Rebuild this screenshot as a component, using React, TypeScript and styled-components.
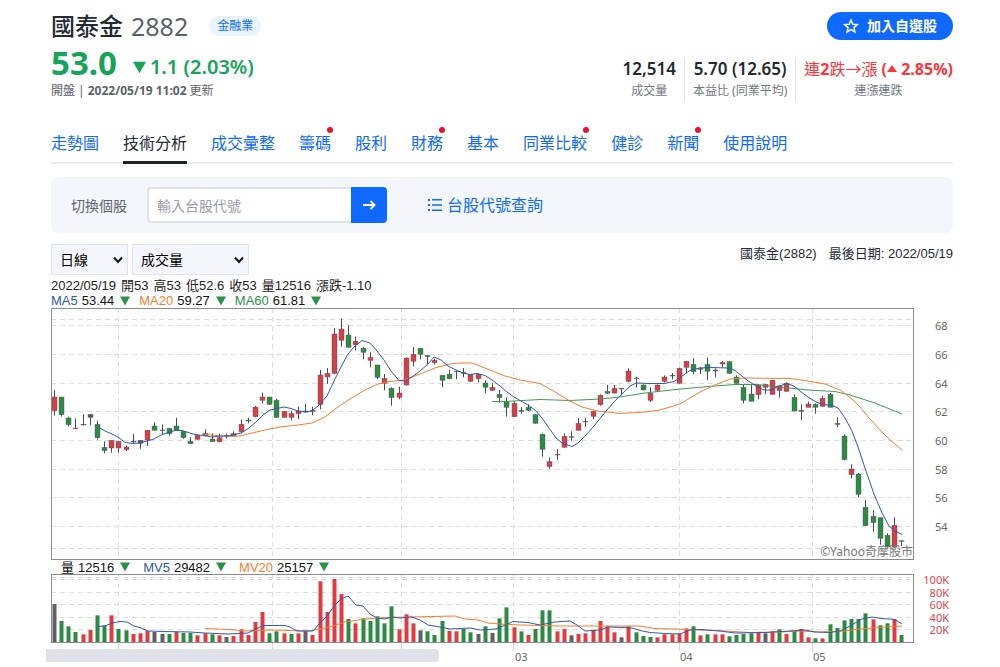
import React from "react";
import styled, { createGlobalStyle } from "styled-components";

const ui = `"Noto Sans", "Noto Sans CJK TC", sans-serif`;
const plain = `"Liberation Sans", "Noto Sans CJK TC", sans-serif`;

const GlobalStyle = createGlobalStyle`
  * { box-sizing: border-box; }
  html { overflow-x: hidden; }
  body { margin: 0; background: #fff; color: #232a31; font-family: ${ui}; }
`;

const Page = styled.main`
  padding: 8px 47px 0 51px;
`;

const Header = styled.header`
  display: flex;
  justify-content: space-between;
`;

const TitleRow = styled.div`
  display: flex;
  align-items: center;
  height: 36px;
`;

const Name = styled.h1`
  margin: 0 8px 0 0;
  font-size: 24px;
  line-height: 36px;
  font-weight: 500;
`;

const Code = styled.span`
  font-size: 25px;
  line-height: 36px;
  color: #5b636a;
`;

const Tag = styled.a`
  margin-left: 21px;
  padding: 0 8px;
  border-radius: 10px;
  background: #eaf4ff;
  color: #0f69ff;
  font-size: 12px;
  line-height: 20px;
  text-decoration: none;
`;

const PriceRow = styled.div`
  display: flex;
  align-items: center;
  height: 38px;
  color: #17a35b;
  font-weight: 600;
`;

const Price = styled.span`
  font-size: 33px;
  line-height: 38px;
  font-weight: 700;
`;

const Change = styled.span`
  display: flex;
  align-items: center;
  gap: 4px;
  margin: 8px 0 0 16px;
  font-size: 20px;
  line-height: 28px;
`;

const Status = styled.div`
  display: flex;
  gap: 3px;
  font-size: 12px;
  line-height: 18px;
  color: #5b636a;
`;

const HeaderSide = styled.div`
  display: flex;
  flex-direction: column;
  align-items: flex-end;
  gap: 18px;
  padding-top: 4px;
`;

const FollowButton = styled.button`
  display: flex;
  align-items: center;
  justify-content: center;
  gap: 8px;
  width: 126px;
  height: 28px;
  padding: 0;
  border: 0;
  border-radius: 14px;
  background: #0f69ff;
  color: #fff;
  font: 700 14px/28px ${ui};
`;

const Stats = styled.dl`
  display: flex;
  margin: 0;
`;

const Stat = styled.div`
  display: flex;
  flex-direction: column;
  align-items: center;
  height: 42px;
  padding: 0 8px;
  border-left: 1px solid #e0e4e9;
  &:first-child { border-left: 0; }
  &:last-child { padding-right: 0; }
`;

const StatValue = styled.dd<{ $up?: boolean }>`
  margin: 0;
  font-size: ${(p) => (p.$up ? 16 : 17)}px;
  line-height: 22px;
  font-weight: ${(p) => (p.$up ? 400 : 600)};
  color: ${(p) => (p.$up ? "#ff333a" : "#232a31")};
  white-space: nowrap;
`;

const StatLabel = styled.dt`
  order: 2;
  font-size: 12px;
  line-height: 22px;
  color: #6e7780;
`;

const Strong = styled.span`
  font-weight: 700;
`;

const Tabs = styled.nav`
  display: flex;
  gap: 24px;
  height: 39px;
  margin-top: 25px;
  border-bottom: 2px solid #e8eaed;
`;

const Tab = styled.a<{ $active?: boolean }>`
  position: relative;
  height: 39px;
  border-bottom: ${(p) => (p.$active ? "3px solid #1d2228" : "0")};
  color: ${(p) => (p.$active ? "#232a31" : "#0f69ff")};
  font-size: 16px;
  line-height: 37px;
  text-decoration: none;
  white-space: nowrap;
`;

const Dot = styled.span`
  position: absolute;
  top: 2px;
  right: -2px;
  width: 6px;
  height: 6px;
  border-radius: 50%;
  background: #eb0f29;
`;

const SearchBar = styled.form`
  display: flex;
  align-items: center;
  height: 56px;
  margin-top: 13px;
  padding: 0 20px;
  border-radius: 8px;
  background: #f3f7fb;
`;

const SearchLabel = styled.label`
  width: 76px;
  font-size: 14px;
  color: #5b636a;
`;

const SearchInput = styled.input`
  width: 204px;
  height: 36px;
  padding: 0 8px;
  border: 2px solid #e0e4e9;
  border-right: 0;
  border-radius: 4px 0 0 4px;
  background: #fff;
  font: 400 14px ${ui};
  &::placeholder { color: #979ea8; opacity: 1; }
`;

const SearchButton = styled.button`
  display: flex;
  align-items: center;
  justify-content: center;
  width: 36px;
  height: 36px;
  padding: 0;
  border: 0;
  border-radius: 0 4px 4px 0;
  background: #0f69ff;
`;

const LookupLink = styled.a`
  display: flex;
  align-items: center;
  gap: 4px;
  margin-left: 40px;
  color: #0f69ff;
  font-size: 16px;
  line-height: 24px;
  text-decoration: none;
`;

const Controls = styled.div`
  display: flex;
  gap: 4px;
  height: 31px;
  margin-top: 11px;
`;

const Picker = styled.div<{ $width: number }>`
  position: relative;
  width: ${(p) => p.$width}px;
  svg { position: absolute; right: 5px; top: 12px; pointer-events: none; }
`;

const Select = styled.select`
  appearance: none;
  width: 100%;
  height: 31px;
  padding: 0 8px;
  border: 1px solid #e0e4e9;
  border-radius: 0;
  background: #f3f7fb;
  color: #000;
  font: 400 14px ${plain};
`;

const Updated = styled.p`
  display: flex;
  gap: 12px;
  margin: 0 0 0 auto;
  font: 400 13px/20px ${plain};
  color: #232a31;
`;

const Quote = styled.p`
  display: flex;
  gap: 5px;
  margin: 3px 0 0;
  font: 400 13px/15px ${plain};
  color: #222;
`;

const Legend = styled.div<{ $inset?: boolean }>`
  display: flex;
  gap: ${(p) => (p.$inset ? 13 : 9)}px;
  height: ${(p) => (p.$inset ? 14 : 15)}px;
  padding-left: ${(p) => (p.$inset ? 10 : 0)}px;
  font: 400 13px/15px ${plain};
`;

const LegendItem = styled.span`
  display: flex;
  align-items: center;
  gap: 4px;
  color: #111;
  svg { margin-left: 2px; }
`;

const Series = styled.span<{ $color: string }>`
  color: ${(p) => p.$color};
`;

const Chart = styled.svg`
  display: block;
  width: 100%;
  height: auto;
  overflow: visible;
`;

const VolumePanel = styled.div`
  position: relative;
`;

const ScrollThumb = styled.div`
  position: absolute;
  left: -5px;
  top: 75px;
  width: 393px;
  height: 13px;
  border-radius: 0 4px 4px 0;
  background: #dfe2e6;
`;

const BLUE = "#3059b0";
const ORANGE = "#fa7d2e";
const GREEN = "#2d9048";

const Down = ({ size = 10, color = GREEN }: { size?: number; color?: string }) => (
  <svg width={size} height={size} viewBox="0 0 10 10" aria-hidden="true">
    <path d="M0 0.5H10L5 9.5Z" fill={color} />
  </svg>
);

const Chevron = () => (
  <svg width="10" height="8" viewBox="0 0 10 8" aria-hidden="true">
    <path d="M1 1.5L5 6L9 1.5" fill="none" stroke="#111" strokeWidth="2" />
  </svg>
);

/* One row per session: high, body top, body bottom, low (thirds of a unit), colour key */
const candles = `270,291,332,347,r 291,291,344,350,g 350,354,374,379,g 355,384,386,387,r 343,373,375,376,k 343,343,352,376,k
362,373,413,419,g 424,442,452,460,g 421,421,444,458,r 424,424,444,458,r 436,441,449,453,r 402,424,426,430,k
421,421,430,446,k 391,391,420,438,r 367,378,391,391,g 373,390,392,403,k 385,385,401,406,g 353,378,391,391,g
394,394,413,416,g 411,424,431,431,g 403,406,418,419,r 388,400,408,409,r 400,417,425,426,g 401,413,425,427,r
400,407,409,416,k 394,401,408,408,r 359,373,395,401,r 353,360,363,370,g 318,321,350,352,r 278,291,301,310,r
291,291,313,315,g 296,301,352,354,g 334,334,352,353,r 332,340,352,361,r 320,333,341,358,r 312,333,336,338,k
320,331,334,346,k 210,225,314,328,r 204,220,231,252,r 84,102,220,223,r 55,87,121,140,r 75,105,142,142,g
110,124,134,151,r 141,145,157,178,g 157,172,181,202,r 194,195,232,237,g 222,235,250,271,r 262,265,293,317,g
260,279,292,298,r 172,174,255,257,r 141,163,184,199,r 144,145,163,178,g 165,166,170,196,g 176,181,188,193,r
225,226,241,262,g 209,223,236,238,g 213,213,215,238,k 204,217,220,232,k 223,223,244,245,r 220,223,236,247,r
241,249,262,279,g 250,262,271,272,r 270,283,293,308,g 292,304,322,350,g 304,310,350,351,r 322,331,334,341,g
313,322,331,333,g 343,344,370,371,g 400,403,448,470,g 472,485,500,506,r 448,463,465,479,r 400,409,442,443,r
394,410,412,422,k 354,370,391,392,r 353,364,366,380,r 332,334,349,358,r 283,286,314,317,r 255,274,280,282,g
255,265,279,281,r 264,265,267,286,k 205,213,244,247,r 230,234,236,262,k 253,255,270,271,g 262,280,301,306,r
253,255,271,274,r 226,231,244,247,r 219,226,228,238,k 203,205,250,251,r 183,184,202,220,r 174,193,215,223,g
201,205,208,222,k 173,193,214,241,g 205,210,213,232,k 183,187,192,202,r 183,185,220,222,g 226,231,250,251,g
255,262,301,310,g 253,282,304,304,g 253,255,284,298,r 252,253,262,282,r 240,241,283,284,r 256,258,272,293,r
247,250,274,275,r 283,292,333,334,g 313,331,334,361,k 305,312,322,322,r 310,313,322,341,g 287,295,319,320,r
279,283,322,322,g 352,370,373,382,k 403,408,479,481,g 493,507,524,535,r 519,522,583,592,g 600,622,677,678,g
630,649,668,695,g 652,653,715,734,g 700,706,741,743,g 652,676,741,743,r 722,722,724,738,k`
  .split(/\s+/)
  .map((row) => {
    const [high, top, bottom, low, tone] = row.split(",");
    return { high: +high / 3 - 8, top: +top / 3 - 8, bottom: +bottom / 3 - 8, low: +low / 3 - 8, tone };
  });

/* Bar tops, same thirds, with the colour key in front */
const volumes = `k162 g213 g229 g246 r253 r240 g196 g226 r196 g237 g241 r252 r250 r243 k246 k252 g252 r246 g249 g249
r256 r250 g253 r256 k261 r258 r238 r255 r216 r186 g250 g244 r250 g252 r250 k243 r255 r94 r186 r87
r132 g207 r220 g205 g213 g199 g220 g169 r238 r193 r220 k241 g244 g255 g213 r243 r244 g237 g247 k252
g229 k249 g205 g172 r232 g244 r255 g237 g181 g181 r244 r237 k256 r252 r250 r240 r213 r229 r247 k262
r229 g247 g258 g261 r262 r253 r253 r250 r235 g229 r256 g253 r253 r253 g259 g255 g252 g250 r247 k250
r244 g238 r252 g243 r237 r262 g265 r265 g223 g234 g211 g207 g207 g190 r208 g226 g220 r207 g255`
  .split(/\s+/)
  .map((v) => ({ tone: v[0], top: +v.slice(1) / 3 - 24 }));

const bodyFill: Record<string, string> = { r: "#d43f48", g: "#2f8a45", k: "#5c5c66" };
const barFill: Record<string, string> = { r: "#df3c42", g: "#2d8a43", k: "#5f6063" };

const sessionX = (i: number) => Math.round(2.8 + i * 7.183);

const MA5 = "48,119.5 54,123 61,126 67,129 74,134.5 82,135.5 89,135 96,133 103,131 110,127 117,124.5 124,122.5 131,122.5 139,125 146,127 154,127.5 161,129 169,128 177,128 184,126.5 191,124.5 198,120 205,114 212,107 219,102 226,100.5 233,99 240,100.5 247,103 254,104 260,103.5 267,98 276,88 283,73 290,59 297,46 304,38 311,32.5 319,35 326,43 333,52 340,63 348,72.5 354,73 361,69 369,63 377,56 383,49 390,52 397,58 405,62 412,65 419,66.5 426,65.5 434,67.5 441,72 449,78 456,84 463,89 470,93 477,97 484,102 491,110 498,120 505,130 511,135 521,138.5 527,135 535,127 543,118 551,108 561,96 571,86 579,78 585,75 599,75.5 613,75.5 623,73.5 630,69 638,63 648,60 659,59.5 678,60 684,62.5 691,68 698,73.5 705,78 713,82 720,82 728,78 736,75.5 743,78 750,84 757,89 765,94 772,96.5 781,97.5 787,100 794,110 801,123 807,139 815,163 823,186 831,205 838,218 844,223 851,226.5";
const MA20 = "151,126 161,127 174,128.5 189,128 199,125.5 214,122 229,119 247,117 261,115 274,109 284,101 299,91 314,82 327,76 339,73.5 353,72 369,66 384,60 399,56 409,55 421,55 434,60 454,68 469,72 489,75.5 504,84 519,93 531,99 547,103 569,105.5 594,104 609,102 629,96 649,84 664,77 679,71 694,70 739,70.5 757,73 774,76 789,82 801,91 809,99 819,111 829,122 839,132 851,142";
const MA60 = "441,93.5 454,93.5 489,91.5 519,92.5 549,91 569,89 594,85 629,81 664,78 684,76.5 705,76.5 729,79 757,82 784,83.5 799,87 824,95 851,106";
const MV5 = "46,52.5 54,52 61,49 69,47.5 76,48 83,52 90,54 97,57 112,57.5 139,58 154,59 177,60 197,59 205,55 212,51.5 234,51.5 239,53 246,57 262,57 269,49 276,42 283,32 290,25 297,22 305,31 312,32 319,40 326,44 334,45 341,43 349,44 361,43 369,46 377,51 389,53 399,55 419,54 429,56 445,55 452,52 462,47.5 477,48.5 489,51 504,48 519,47 526,51 534,57 549,56 557,53 571,53.5 581,54 589,56.5 599,58.5 614,59.5 629,60 639,56 649,55.5 669,57 684,59 714,58.5 739,57 754,56 764,58 779,58.5 789,57 799,52 811,45 821,43 831,44.5 844,45.5 851,50";
const MV20 = "154,54.5 179,55.5 194,57 219,56 259,57 269,55 279,53 294,48 314,45 334,43.5 359,43 404,42 414,45 427,46 437,49 449,50 469,51 509,52 559,52 589,52 604,54.5 624,55 649,56 674,57 699,58.5 729,58 749,57 769,58 794,57 809,55 829,53.5 851,52";

const months = [67.5, 221.5, 350.5, 462.5, 628.5, 761.5];
const priceTicks: [number, string][] = [[17.5, "68"], [46.5, "66"], [75.5, "64"], [103.5, "62"], [132.5, "60"], [161.5, "58"], [189.5, "56"], [218.5, "54"]];
const volumeTicks: [number, string][] = [[5.5, "100K"], [18.5, "80K"], [30.5, "60K"], [43.5, "40K"], [55.5, "20K"]];

const tabs: { label: string; dot?: boolean; active?: boolean }[] = [
  { label: "走勢圖" }, { label: "技術分析", active: true }, { label: "成交彙整" }, { label: "籌碼", dot: true },
  { label: "股利" }, { label: "財務", dot: true }, { label: "基本" }, { label: "同業比較", dot: true },
  { label: "健診" }, { label: "新聞", dot: true }, { label: "使用說明" },
];

const quote = ["2022/05/19", "開53", "高53", "低52.6", "收53", "量12516", "漲跌-1.10"];

const Line = ({ points, color }: { points: string; color: string }) => (
  <polyline points={points} fill="none" stroke={color} strokeWidth="1" strokeLinejoin="round" />
);

const PriceChart = () => (
  <Chart viewBox="0 0 902 252" role="img" aria-label="股價走勢">
    <g stroke="#dcdcdc" strokeDasharray="5 4">
      {[11.5, ...priceTicks.map(([y]) => y), 240.5].map((y) => <path key={y} d={`M0 ${y}H862`} />)}
      {months.map((x) => <path key={x} d={`M${x} 0V251`} />)}
    </g>
    {candles.map((c, i) => {
      const x = sessionX(i);
      const color = bodyFill[c.tone];
      return (
        <g key={i} stroke="#4a4a50">
          <path d={`M${x + 0.5} ${c.high}V${c.low}`} />
          <rect x={x - 2} y={c.top} width="5" height={Math.max(c.bottom - c.top, 0.5)} fill={color} strokeOpacity="0.6" strokeWidth="0.6" />
        </g>
      );
    })}
    <Line points={MA60} color="#43995a" />
    <Line points={MA20} color={ORANGE} />
    <Line points={MA5} color={BLUE} />
    <rect x="0.5" y="0.5" width="862" height="251" fill="none" stroke="#8c8c8c" />
    <text x="862" y="248" textAnchor="end" fontFamily={ui} fontSize="12" fill="#777">©Yahoo奇摩股市</text>
    <g fontFamily={ui} fontSize="11" fill="#666">
      {priceTicks.map(([y, label]) => <text key={label} x="884" y={y + 4}>{label}</text>)}
    </g>
  </Chart>
);

const VolumeChart = () => (
  <Chart viewBox="0 0 902 88" role="img" aria-label="成交量">
    <g stroke="#dcdcdc" strokeDasharray="5 4">
      {[3.5, ...volumeTicks.map(([y]) => y)].map((y) => <path key={y} d={`M0 ${y}H862`} />)}
      {months.map((x) => <path key={x} d={`M${x} 0V68`} />)}
    </g>
    <g stroke="#d6d6d6">
      {months.map((x) => <path key={x} d={`M${x} 69V77`} />)}
    </g>
    {volumes.map((v, i) => (
      <rect key={i} x={sessionX(i) - 1.5} y={v.top} width="4" height={68.5 - v.top} fill={barFill[v.tone]} />
    ))}
    <Line points={MV20} color={ORANGE} />
    <Line points={MV5} color={BLUE} />
    <rect x="0.5" y="0.5" width="862" height="68" fill="none" stroke="#8c8c8c" />
    <g fontFamily={ui} fontSize="11" fill="#d8434a" textAnchor="end">
      {volumeTicks.map(([y, label]) => <text key={label} x="898" y={y + 4}>{label}</text>)}
    </g>
    <g fontFamily={ui} fontSize="11" fill="#666">
      <text x="464" y="87">03</text>
      <text x="629" y="87">04</text>
      <text x="762" y="87">05</text>
    </g>
  </Chart>
);

export default function App() {
  return (
    <Page>
      <GlobalStyle />
      <Header>
        <div>
          <TitleRow>
            <Name>國泰金</Name>
            <Code>2882</Code>
            <Tag href="#sector">金融業</Tag>
          </TitleRow>
          <PriceRow>
            <Price>53.0</Price>
            <Change>
              <Down size={13} color="#17a35b" />
              1.1 (2.03%)
            </Change>
          </PriceRow>
          <Status>
            <span>開盤 |</span>
            <Strong>2022/05/19 11:02</Strong>
            <span>更新</span>
          </Status>
        </div>
        <HeaderSide>
          <FollowButton type="button">
            <svg width="16" height="16" viewBox="0 0 24 24" fill="none" stroke="currentColor" strokeWidth="2.2" strokeLinejoin="miter" aria-hidden="true">
              <path d="M12 3L14.7 9.3L21.5 9.9L16.4 14.4L17.9 21L12 17.5L6.1 21L7.6 14.4L2.5 9.9L9.3 9.3Z" />
            </svg>
            加入自選股
          </FollowButton>
          <Stats>
            <Stat>
              <StatLabel>成交量</StatLabel>
              <StatValue>12,514</StatValue>
            </Stat>
            <Stat>
              <StatLabel>本益比 (同業平均)</StatLabel>
              <StatValue>5.70 (12.65)</StatValue>
            </Stat>
            <Stat>
              <StatLabel>連漲連跌</StatLabel>
              <StatValue $up>
                連<Strong>2</Strong>跌→漲 <Strong>(</Strong>
                <svg width="10" height="12" viewBox="0 0 10 12" aria-hidden="true">
                  <path d="M0 9L5 2L10 9Z" fill="currentColor" />
                </svg>
                <Strong> 2.85%)</Strong>
              </StatValue>
            </Stat>
          </Stats>
        </HeaderSide>
      </Header>

      <Tabs>
        {tabs.map((t) => (
          <Tab key={t.label} href="#tab" $active={t.active}>
            {t.label}
            {t.dot && <Dot />}
          </Tab>
        ))}
      </Tabs>

      <SearchBar>
        <SearchLabel htmlFor="symbol">切換個股</SearchLabel>
        <SearchInput id="symbol" type="text" placeholder="輸入台股代號" />
        <SearchButton type="button" aria-label="查詢">
          <svg width="14" height="12" viewBox="0 0 14 12" fill="none" stroke="#fff" strokeWidth="1.8" aria-hidden="true">
            <path d="M1 6H12.5M8.5 2L12.5 6L8.5 10" />
          </svg>
        </SearchButton>
        <LookupLink href="#lookup">
          <svg width="16" height="14" viewBox="0 0 16 14" fill="#0f69ff" aria-hidden="true">
            <path d="M1 1h2v2H1zM5 1h10v1.6H5zM1 6h2v2H1zM5 6.2h10v1.6H5zM1 11h2v2H1zM5 11.4h10V13H5z" />
          </svg>
          台股代號查詢
        </LookupLink>
      </SearchBar>

      <Controls>
        <Picker $width={77}>
          <Select aria-label="週期"><option>日線</option></Select>
          <Chevron />
        </Picker>
        <Picker $width={117}>
          <Select aria-label="指標"><option>成交量</option></Select>
          <Chevron />
        </Picker>
        <Updated>
          <span>國泰金(2882)</span>
          <span>最後日期: 2022/05/19</span>
        </Updated>
      </Controls>
      <Quote>
        {quote.map((part) => <span key={part}>{part}</span>)}
      </Quote>
      <Legend>
        <LegendItem><Series $color={BLUE}>MA5</Series>53.44 <Down /></LegendItem>
        <LegendItem><Series $color={ORANGE}>MA20</Series>59.27 <Down /></LegendItem>
        <LegendItem><Series $color={GREEN}>MA60</Series>61.81 <Down /></LegendItem>
      </Legend>
      <PriceChart />
      <Legend $inset>
        <LegendItem><span>量</span>12516 <Down /></LegendItem>
        <LegendItem><Series $color={BLUE}>MV5</Series>29482 <Down /></LegendItem>
        <LegendItem><Series $color={ORANGE}>MV20</Series>25157 <Down /></LegendItem>
      </Legend>
      <VolumePanel>
        <VolumeChart />
        <ScrollThumb />
      </VolumePanel>
    </Page>
  );
}
